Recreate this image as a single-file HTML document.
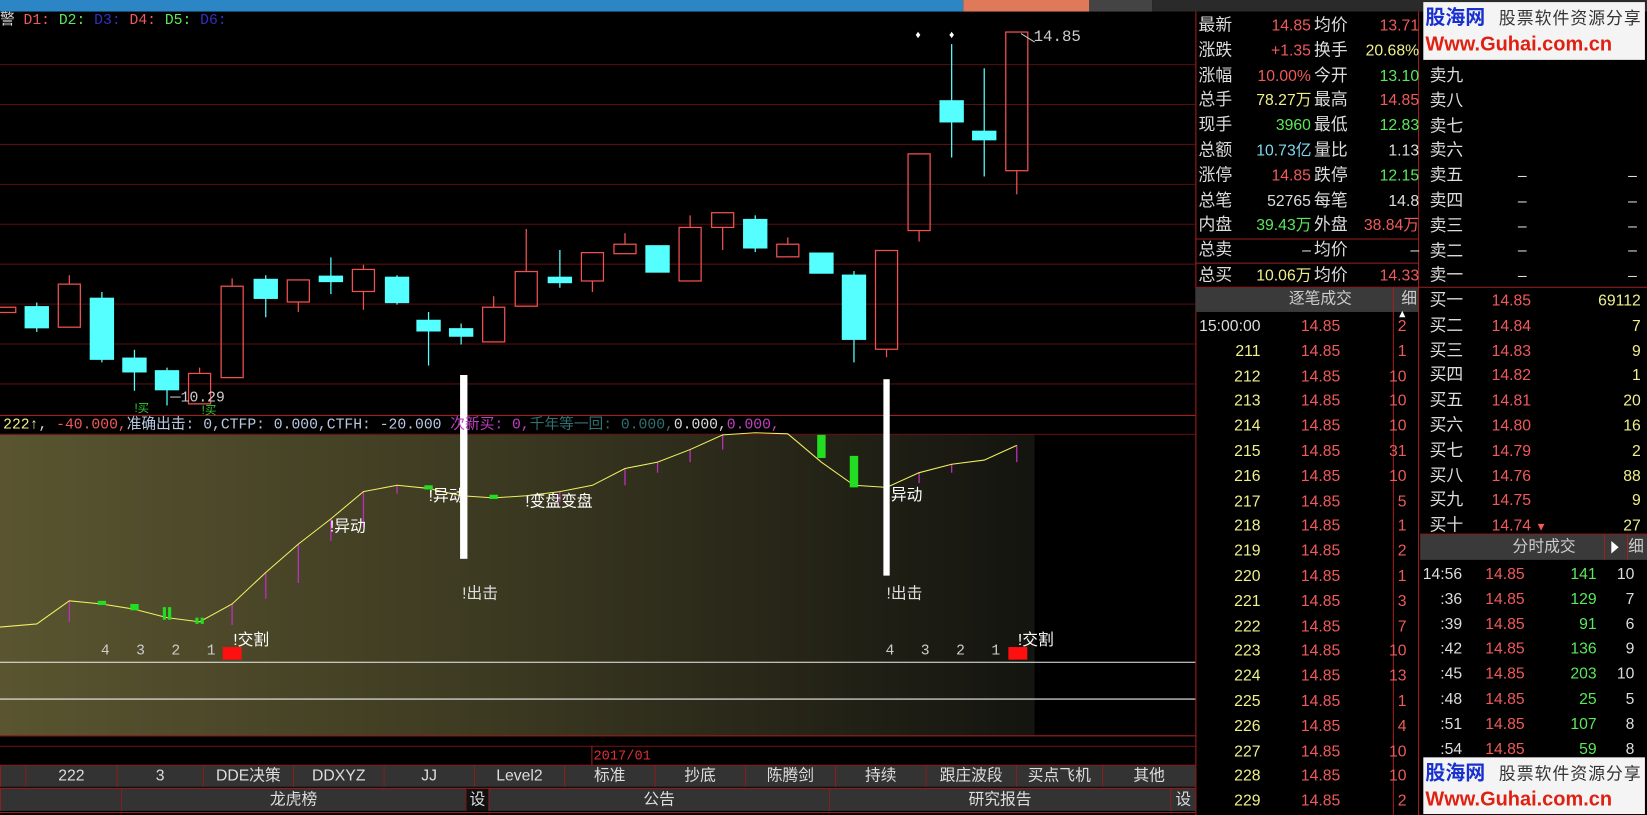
<!DOCTYPE html>
<html><head><meta charset="utf-8">
<style>
*{margin:0;padding:0;box-sizing:border-box}
body{width:1647px;height:815px;background:#000;overflow:hidden;position:relative;font-family:"Liberation Sans","Noto Sans CJK SC",sans-serif;font-size:15px;color:#d8d8d8}
#w{position:absolute;left:0;top:0;width:1568px;height:776px;overflow:hidden;transform:scale(1.0504);transform-origin:0 0}
.a{position:absolute;white-space:nowrap;line-height:18px}
.m{font-family:"Liberation Mono","Noto Sans CJK SC",monospace}
.r{color:#f05a5a}.y{color:#f0f08a}.g{color:#5ae85a}.c{color:#7fd8f0}.w{color:#dcdcdc}.p{color:#c040c0}.b{color:#3030c0}
.tab{position:absolute;top:729px;height:20px;background:#333;border-left:1px solid #8a2020;color:#ddd;text-align:center;line-height:20px;font-size:15px}
.tab2{position:absolute;top:751px;height:21px;background:#333;border-left:1px solid #8a2020;color:#ddd;text-align:center;line-height:21px;font-size:15px}
.rt{text-align:right}
</style></head><body><div id="w">
<div class="a" style="left:0;top:0;width:917px;height:11px;background:#2c86c6"></div>
<div class="a" style="left:917px;top:0;width:120px;height:11px;background:#e0785a"></div>
<div class="a" style="left:1037px;top:0;width:60px;height:11px;background:#444"></div>
<div class="a" style="left:1097px;top:0;width:471px;height:11px;background:#2a2a2a"></div>

<svg class="a" style="left:0;top:0" width="1140" height="776">
<defs><linearGradient id="gr" x1="0" x2="1" y1="0" y2="0"><stop offset="0" stop-color="#5a5530"/><stop offset="0.5" stop-color="#3a3820"/><stop offset="1" stop-color="#141410"/></linearGradient></defs>
<rect x="0" y="413" width="985" height="287" fill="url(#gr)"/>
<g stroke="#5a0e0e" stroke-width="1">
<line x1="0" y1="61.5" x2="1138" y2="61.5"/><line x1="0" y1="99.5" x2="1138" y2="99.5"/><line x1="0" y1="137.5" x2="1138" y2="137.5"/><line x1="0" y1="175.5" x2="1138" y2="175.5"/><line x1="0" y1="213.5" x2="1138" y2="213.5"/><line x1="0" y1="251.5" x2="1138" y2="251.5"/><line x1="0" y1="289.5" x2="1138" y2="289.5"/><line x1="0" y1="327.5" x2="1138" y2="327.5"/><line x1="0" y1="365.5" x2="1138" y2="365.5"/>
</g>
<line x1="0" y1="395.5" x2="1138" y2="395.5" stroke="#a02020"/>
<line x1="0" y1="413.5" x2="1138" y2="413.5" stroke="#6a1010"/>
<line x1="1138.5" y1="11" x2="1138.5" y2="776" stroke="#a02020"/>
<g stroke-width="1.2">
<g stroke="#55ffff" fill="#55ffff">
<line x1="35" y1="288" x2="35" y2="316"/><rect x="24" y="292" width="22" height="20"/>
<line x1="97" y1="278" x2="97" y2="345"/><rect x="86" y="284" width="22" height="58"/>
<line x1="128" y1="333" x2="128" y2="372"/><rect x="117" y="341" width="22" height="13"/>
<line x1="159" y1="350" x2="159" y2="386"/><rect x="148" y="353" width="22" height="18"/>
<line x1="253" y1="262" x2="253" y2="302"/><rect x="242" y="266" width="22" height="18"/>
<line x1="315" y1="245" x2="315" y2="280"/><rect x="304" y="263" width="22" height="5"/>
<line x1="378" y1="262" x2="378" y2="290"/><rect x="367" y="264" width="22" height="24"/>
<line x1="408" y1="297" x2="408" y2="348"/><rect x="397" y="305" width="22" height="10"/>
<line x1="439" y1="308" x2="439" y2="328"/><rect x="428" y="313" width="22" height="7"/>
<line x1="533" y1="238" x2="533" y2="274"/><rect x="522" y="264" width="22" height="5"/>
<rect x="615" y="234" width="22" height="25"/>
<line x1="719" y1="205" x2="719" y2="240"/><rect x="708" y="209" width="22" height="27"/>
<rect x="771" y="241" width="22" height="19"/>
<line x1="813" y1="258" x2="813" y2="345"/><rect x="802" y="262" width="22" height="61"/>
<line x1="906" y1="42" x2="906" y2="150"/><rect x="895" y="96" width="22" height="20"/>
<line x1="937" y1="65" x2="937" y2="168"/><rect x="926" y="125" width="22" height="8"/>
</g>
<g stroke="#f05050" fill="none">
<rect x="-6" y="292.5" width="21" height="5"/>
<line x1="66" y1="262" x2="66" y2="270"/><rect x="55.5" y="270.5" width="21" height="41"/>
<line x1="190" y1="350" x2="190" y2="355"/><rect x="179.5" y="355.5" width="21" height="29"/>
<line x1="221" y1="265" x2="221" y2="272"/><rect x="210.5" y="272.5" width="21" height="87"/>
<line x1="284" y1="288" x2="284" y2="297"/><rect x="273.5" y="266.5" width="21" height="21"/>
<line x1="346" y1="252" x2="346" y2="256"/><line x1="346" y1="278" x2="346" y2="295"/><rect x="335.5" y="256.5" width="21" height="21"/>
<line x1="470" y1="282" x2="470" y2="292"/><rect x="459.5" y="292.5" width="21" height="33"/>
<line x1="501" y1="218" x2="501" y2="258"/><rect x="490.5" y="258.5" width="21" height="33"/>
<line x1="564" y1="268" x2="564" y2="278"/><rect x="553.5" y="240.5" width="21" height="27"/>
<line x1="595" y1="222" x2="595" y2="232"/><rect x="584.5" y="232.5" width="21" height="9"/>
<line x1="657" y1="205" x2="657" y2="216"/><rect x="646.5" y="216.5" width="21" height="51"/>
<line x1="688" y1="217" x2="688" y2="238"/><rect x="677.5" y="202.5" width="21" height="14"/>
<line x1="750" y1="226" x2="750" y2="232"/><rect x="739.5" y="232.5" width="21" height="12"/>
<rect x="833.5" y="238.5" width="21" height="94"/><line x1="844" y1="333" x2="844" y2="340"/>
<line x1="875" y1="220" x2="875" y2="230"/><rect x="864.5" y="146.5" width="21" height="73"/>
<line x1="968" y1="163" x2="968" y2="185"/><rect x="957.5" y="30.5" width="21" height="132"/>
</g>
</g>
<text x="874" y="36" fill="#fff" font-size="10" text-anchor="middle">♦</text>
<text x="906" y="36" fill="#fff" font-size="10" text-anchor="middle">♦</text>
<line x1="972" y1="32" x2="985" y2="40" stroke="#ccc"/>
<line x1="162" y1="378" x2="172" y2="378" stroke="#ccc"/>
<g stroke="#c030c0" stroke-width="1.2">
<line x1="66" y1="572" x2="66" y2="592"/><line x1="253" y1="545" x2="253" y2="570"/><line x1="284" y1="518" x2="284" y2="555"/><line x1="315" y1="494" x2="315" y2="515"/><line x1="346" y1="468" x2="346" y2="502"/><line x1="378" y1="462" x2="378" y2="470"/><line x1="533" y1="468" x2="533" y2="478"/><line x1="595" y1="446" x2="595" y2="462"/><line x1="626" y1="440" x2="626" y2="450"/><line x1="657" y1="428" x2="657" y2="440"/><line x1="688" y1="414" x2="688" y2="428"/><line x1="906" y1="442" x2="906" y2="450"/><line x1="875" y1="450" x2="875" y2="460"/><line x1="968" y1="424" x2="968" y2="440"/><line x1="221" y1="575" x2="221" y2="595"/>
</g>
<polyline fill="none" stroke="#f0f060" stroke-width="1" points="0,597 35,594 66,572 97,575 128,580 159,588 190,592 221,575 253,545 284,518 315,494 346,468 378,462 408,465 439,472 470,474 501,472 533,468 564,462 595,446 626,440 657,428 688,414 719,412 750,413 782,440 813,462 844,464 875,450 906,442 937,438 968,424"/>
<g fill="#22dd22">
<rect x="93" y="572" width="8" height="4"/><rect x="124" y="575" width="8" height="6"/><rect x="155" y="578" width="3" height="12"/><rect x="160" y="578" width="3" height="12"/><rect x="186" y="588" width="3" height="6"/><rect x="191" y="588" width="3" height="6"/><rect x="404" y="462" width="8" height="4"/><rect x="466" y="471" width="8" height="4"/><rect x="778" y="414" width="8" height="22"/><rect x="809" y="434" width="8" height="30"/>
</g>
<rect x="438" y="357" width="7" height="175" fill="#fff"/>
<rect x="841" y="361" width="6" height="187" fill="#fff"/>
<rect x="212" y="616" width="18" height="12" fill="#ff1010"/>
<rect x="960" y="616" width="18" height="12" fill="#ff1010"/>
<line x1="0" y1="630.5" x2="1138" y2="630.5" stroke="#eee"/>
<line x1="0" y1="665.5" x2="1138" y2="665.5" stroke="#eee"/>
<line x1="0" y1="700.5" x2="1138" y2="700.5" stroke="#a02020"/>
<line x1="0" y1="710.5" x2="1138" y2="710.5" stroke="#6a1010"/>
<line x1="563.5" y1="710" x2="563.5" y2="728" stroke="#a02020"/>
<line x1="0" y1="728.5" x2="1138" y2="728.5" stroke="#a02020"/>
<line x1="0" y1="750.5" x2="1138" y2="750.5" stroke="#a02020"/>
<line x1="0" y1="773.5" x2="1138" y2="773.5" stroke="#a02020"/>
</svg>

<div class="a m" style="left:0;top:11px;font-size:14px"><span class="w">警</span> <span class="r">D1:</span> <span class="g">D2:</span> <span class="b">D3:</span> <span class="r">D4:</span> <span class="g">D5:</span> <span class="b">D6:</span></div>
<div class="a m" style="left:984px;top:27px;font-size:15px;color:#ccc">14.85</div>
<div class="a m" style="left:172px;top:370px;font-size:14px;color:#ccc">10.29</div>
<div class="a" style="left:128px;top:380px;font-size:11px;color:#3c3">!买</div>
<div class="a" style="left:192px;top:382px;font-size:11px;color:#3c3">!买</div>
<div class="a m" style="left:3px;top:396px;font-size:14px"><span class="y">222↑</span>, <span class="r">-40.000,</span><span style="color:#b8c8e0">准确出击: 0,CTFP: 0.000,CTFH: -20.000</span> <span class="p">次新买: 0,</span><span style="color:#307070">千年等一回: 0.000,</span><span class="w">0.000,</span><span class="p">0.000,</span></div>
<div class="a" style="left:314px;top:493px;color:#fff">!异动</div>
<div class="a" style="left:408px;top:464px;color:#fff">!异动</div>
<div class="a" style="left:500px;top:469px;color:#fff">!变盘变盘</div>
<div class="a" style="left:844px;top:463px;color:#fff">!异动</div>
<div class="a" style="left:440px;top:557px;color:#ddd">!出击</div>
<div class="a" style="left:844px;top:557px;color:#ddd">!出击</div>
<div class="a" style="left:222px;top:601px;color:#fff">!交割</div>
<div class="a" style="left:969px;top:601px;color:#fff">!交割</div>
<div class="a m" style="left:96px;top:611px;font-size:14px;color:#ccc">4&nbsp;&nbsp;&nbsp;3&nbsp;&nbsp;&nbsp;2&nbsp;&nbsp;&nbsp;1</div>
<div class="a m" style="left:843px;top:611px;font-size:14px;color:#ccc">4&nbsp;&nbsp;&nbsp;3&nbsp;&nbsp;&nbsp;2&nbsp;&nbsp;&nbsp;1</div>
<div class="a m" style="left:565px;top:711px;font-size:13px;color:#e03030">2017/01</div>

<div class="tab" style="left:0;width:24px"></div>
<div class="tab" style="left:24px;width:87px">222</div>
<div class="tab" style="left:111px;width:82px">3</div>
<div class="tab" style="left:193px;width:86px">DDE决策</div>
<div class="tab" style="left:279px;width:86px">DDXYZ</div>
<div class="tab" style="left:365px;width:86px">JJ</div>
<div class="tab" style="left:451px;width:86px">Level2</div>
<div class="tab" style="left:537px;width:86px">标准</div>
<div class="tab" style="left:623px;width:86px">抄底</div>
<div class="tab" style="left:709px;width:86px">陈腾剑</div>
<div class="tab" style="left:795px;width:86px">持续</div>
<div class="tab" style="left:881px;width:86px">跟庄波段</div>
<div class="tab" style="left:967px;width:82px">买点飞机</div>
<div class="tab" style="left:1049px;width:89px">其他</div>
<div class="tab2" style="left:0;width:115px"></div>
<div class="tab2" style="left:115px;width:328px">龙虎榜</div>
<div class="tab2" style="left:443px;width:22px;background:#111">设</div>
<div class="tab2" style="left:465px;width:324px">公告</div>
<div class="tab2" style="left:789px;width:325px">研究报告</div>
<div class="tab2" style="left:1114px;width:24px;background:#333">设</div>

<svg class="a" style="left:1138px;top:0" width="430" height="776">
<line x1="212.5" y1="11" x2="212.5" y2="776" stroke="#a02020"/>
<line x1="0" y1="227.5" x2="212" y2="227.5" stroke="#a02020"/>
<line x1="0" y1="250.5" x2="212" y2="250.5" stroke="#a02020"/>
<line x1="0" y1="273.5" x2="430" y2="273.5" stroke="#a02020"/>
<rect x="0" y="274" width="212" height="23" fill="#3a3a3a"/>
<line x1="188.5" y1="274" x2="188.5" y2="776" stroke="#a02020"/>
<line x1="214" y1="508.5" x2="430" y2="508.5" stroke="#a02020"/>
<rect x="214" y="509" width="216" height="24" fill="#3a3a3a"/>
<line x1="389.5" y1="509" x2="389.5" y2="533" stroke="#a02020"/>
<line x1="411.5" y1="509" x2="411.5" y2="533" stroke="#a02020"/>
<polygon points="396,515 396,527 403,521" fill="#fff"/>
<polygon points="194,302 200,302 197,296" fill="#fff"/>
</svg>
<div class="a" style="left:1334px;top:276px;color:#ccc">细</div>
<div class="a" style="left:1212px;top:276px;width:90px;text-align:center;color:#ccc">逐笔成交</div>
<div class="a" style="left:1420px;top:512px;width:100px;text-align:center;color:#ccc">分时成交</div>
<div class="a" style="left:1550px;top:512px;color:#ccc">细</div>

<div class="a" style="left:1141px;top:13px;line-height:23.8px;font-size:16px;color:#ddd">最新<br>涨跌<br>涨幅<br>总手<br>现手<br>总额<br>涨停<br>总笔<br>内盘<br>总卖<br>总买</div>
<div class="a rt" style="left:1196px;top:13px;width:52px;line-height:23.8px;font-size:15px"><span class="r">14.85</span><br><span class="r">+1.35</span><br><span class="r">10.00%</span><br><span class="y">78.27万</span><br><span class="g">3960</span><br><span class="c">10.73亿</span><br><span class="r">14.85</span><br><span class="w">52765</span><br><span class="g">39.43万</span><br><span class="w">–</span><br><span class="y">10.06万</span></div>
<div class="a" style="left:1251px;top:13px;line-height:23.8px;font-size:16px;color:#ddd">均价<br>换手<br>今开<br>最高<br>最低<br>量比<br>跌停<br>每笔<br>外盘<br>均价<br>均价</div>
<div class="a rt" style="left:1290px;top:13px;width:61px;line-height:23.8px;font-size:15px"><span class="r">13.71</span><br><span class="y">20.68%</span><br><span class="g">13.10</span><br><span class="r">14.85</span><br><span class="g">12.83</span><br><span class="w">1.13</span><br><span class="g">12.15</span><br><span class="w">14.8</span><br><span class="r">38.84万</span><br><span class="w">–</span><br><span class="r">14.33</span></div>

<div class="a rt" style="left:1140px;top:299px;width:60px;line-height:23.8px;font-size:15px" ><span class="w">15:00:00</span><br><span class="y">211<br>212<br>213<br>214<br>215<br>216<br>217<br>218<br>219<br>220<br>221<br>222<br>223<br>224<br>225<br>226<br>227<br>228<br>229</span></div>
<div class="a rt r" style="left:1220px;top:299px;width:56px;line-height:23.8px;font-size:15px">14.85<br>14.85<br>14.85<br>14.85<br>14.85<br>14.85<br>14.85<br>14.85<br>14.85<br>14.85<br>14.85<br>14.85<br>14.85<br>14.85<br>14.85<br>14.85<br>14.85<br>14.85<br>14.85<br>14.85</div>
<div class="a rt r" style="left:1300px;top:299px;width:39px;line-height:23.8px;font-size:15px">2<br>1<br>10<br>10<br>10<br>31<br>10<br>5<br>1<br>2<br>1<br>3<br>7<br>10<br>13<br>1<br>4<br>10<br>10<br>2</div>

<div class="a" style="left:1361px;top:61px;line-height:23.8px;font-size:16px;color:#ddd">卖九<br>卖八<br>卖七<br>卖六<br>卖五<br>卖四<br>卖三<br>卖二<br>卖一</div>
<div class="a w" style="left:1445px;top:156px;line-height:23.8px">–<br>–<br>–<br>–<br>–</div>
<div class="a w" style="left:1550px;top:156px;line-height:23.8px">–<br>–<br>–<br>–<br>–</div>
<div class="a" style="left:1361px;top:275px;line-height:23.8px;font-size:16px;color:#ddd">买一<br>买二<br>买三<br>买四<br>买五<br>买六<br>买七<br>买八<br>买九<br>买十</div>
<div class="a r" style="left:1420px;top:275px;line-height:23.8px">14.85<br>14.84<br>14.83<br>14.82<br>14.81<br>14.80<br>14.79<br>14.76<br>14.75<br>14.74 <span style="font-size:11px">▼</span></div>
<div class="a rt y" style="left:1500px;top:275px;width:62px;line-height:23.8px">69112<br>7<br>9<br>1<br>20<br>16<br>2<br>88<br>9<br>27</div>
<div class="a rt w" style="left:1352px;top:535px;width:40px;line-height:23.8px">14:56<br>:36<br>:39<br>:42<br>:45<br>:48<br>:51<br>:54</div>
<div class="a r" style="left:1414px;top:535px;line-height:23.8px">14.85<br>14.85<br>14.85<br>14.85<br>14.85<br>14.85<br>14.85<br>14.85</div>
<div class="a rt g" style="left:1480px;top:535px;width:40px;line-height:23.8px">141<br>129<br>91<br>136<br>203<br>25<br>107<br>59</div>
<div class="a rt w" style="left:1530px;top:535px;width:26px;line-height:23.8px">10<br>7<br>6<br>9<br>10<br>5<br>8<br>8</div>

<div class="a" style="left:1355px;top:2px;width:211px;height:55px;background:#f4f4f4">
 <div class="a" style="left:2px;top:6px;font-size:19px;font-weight:bold;color:#1830d0;line-height:20px">股海网</div>
 <div class="a" style="left:72px;top:7px;font-size:16px;color:#333;line-height:20px;letter-spacing:1px">股票软件资源分享</div>
 <div class="a" style="left:2px;top:30px;font-size:19px;font-weight:bold;color:#e02010;line-height:22px">Www.Guhai.com.cn</div>
</div>
<div class="a" style="left:1355px;top:721px;width:211px;height:54px;background:#f4f4f4">
 <div class="a" style="left:2px;top:6px;font-size:19px;font-weight:bold;color:#1830d0;line-height:20px">股海网</div>
 <div class="a" style="left:72px;top:7px;font-size:16px;color:#333;line-height:20px;letter-spacing:1px">股票软件资源分享</div>
 <div class="a" style="left:2px;top:30px;font-size:19px;font-weight:bold;color:#e02010;line-height:22px">Www.Guhai.com.cn</div>
</div>
</div></body></html>
